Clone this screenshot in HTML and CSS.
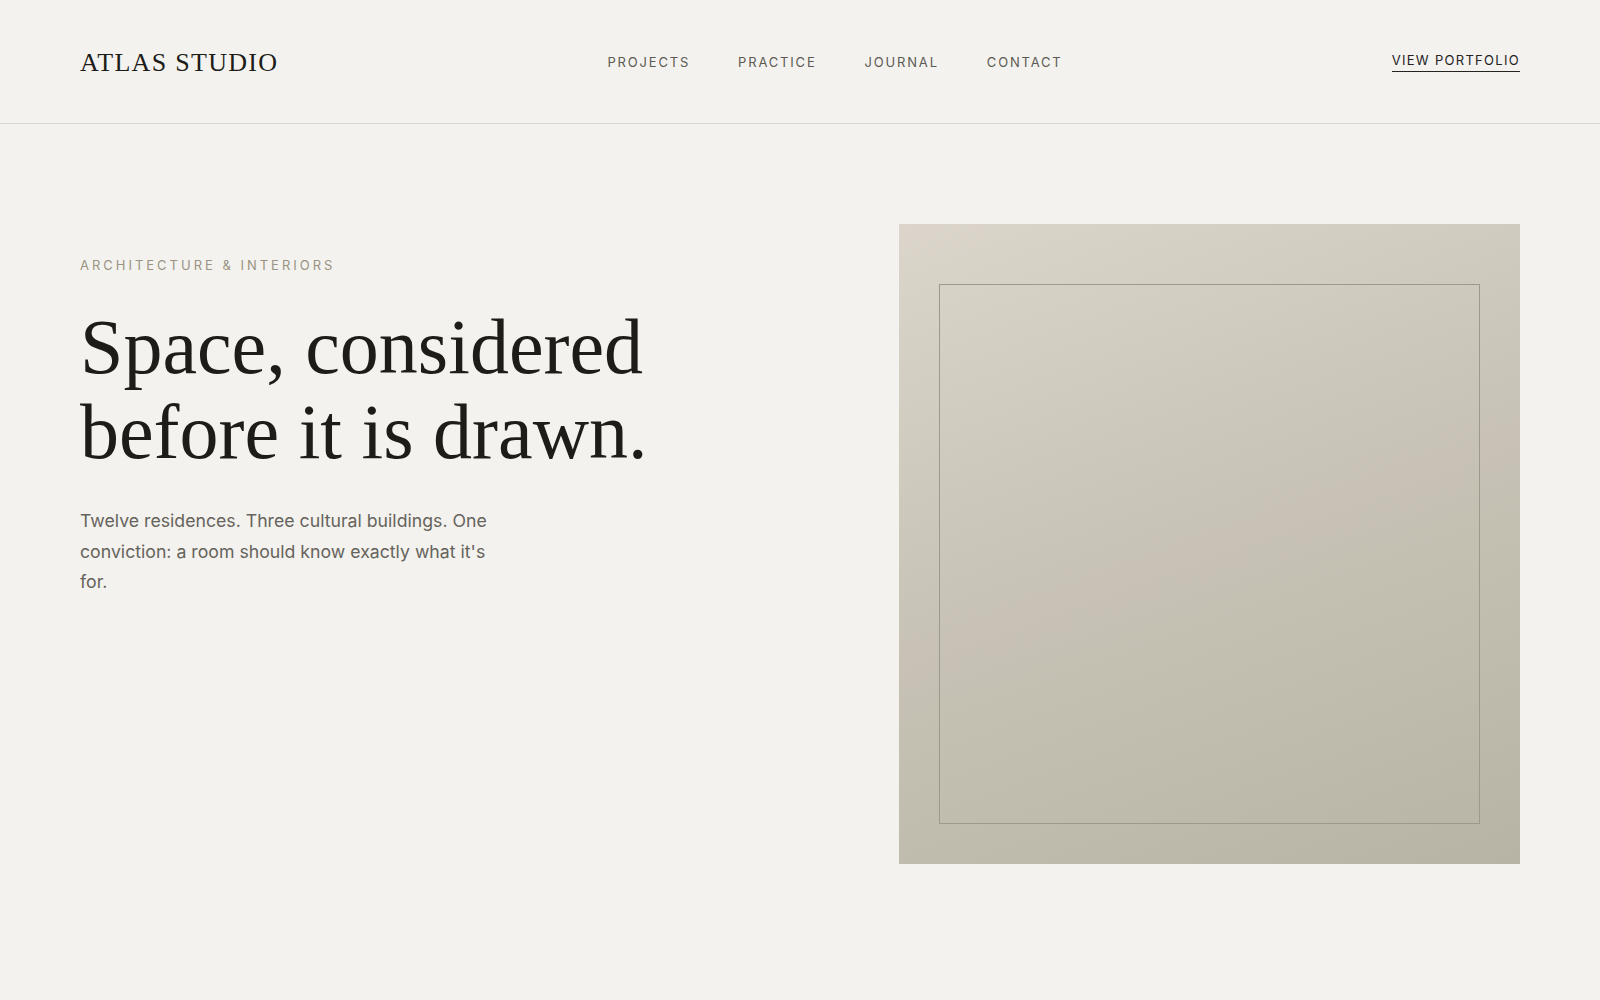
FILE: index.html
```html
<!DOCTYPE html>
<html lang="en">
<head>
<meta charset="utf-8">
<title>Atlas Studio</title>
<link rel="stylesheet" href="styles.css">
</head>
<body>
<header class="site-header">
  <a class="logo" href="#">ATLAS STUDIO</a>
  <nav class="main-nav">
    <a href="#">PROJECTS</a>
    <a href="#">PRACTICE</a>
    <a href="#">JOURNAL</a>
    <a href="#">CONTACT</a>
  </nav>
  <a class="cta" href="#">VIEW PORTFOLIO</a>
</header>
<main class="hero">
  <div class="hero-text">
    <p class="eyebrow">ARCHITECTURE &amp; INTERIORS</p>
    <h1 class="headline">Space, considered<br>before it is drawn.</h1>
    <p class="lede">Twelve residences. Three cultural buildings. One conviction: a room should know exactly what it's for.</p>
  </div>
  <div class="hero-visual">
    <div class="frame"></div>
  </div>
</main>
</body>
</html>
```
FILE: styles.css
```css
* { box-sizing: border-box; }
html, body { margin: 0; padding: 0; }
body {
  background: #f3f2ee;
  font-family: "Inter", "Liberation Sans", sans-serif;
  color: #1f1e1b;
  width: 1600px;
  height: 1000px;
  overflow: hidden;
}
a { text-decoration: none; color: inherit; }

.site-header {
  height: 124px;
  padding: 0 80px;
  display: flex;
  align-items: center;
  justify-content: space-between;
  border-bottom: 1px solid #d9d7d1;
}
.logo {
  font-family: "Liberation Serif", "DejaVu Serif", serif;
  font-size: 26px;
  letter-spacing: 0.05em;
  color: #1d1c19;
  padding-top: 2px;
}
.main-nav {
  display: flex;
  gap: 48px;
}
.main-nav a {
  font-size: 13px;
  letter-spacing: 0.14em;
  color: #5c5a53;
}
.cta {
  font-size: 13px;
  letter-spacing: 0.1em;
  color: #24231f;
  padding-bottom: 3px;
  border-bottom: 1px solid #24231f;
}

.hero {
  display: grid;
  grid-template-columns: 1fr 621px;
  padding: 100px 80px;
}
.hero-text {
  padding-top: 33px;
}
.eyebrow {
  margin: 0;
  font-size: 13px;
  letter-spacing: 0.23em;
  color: #9a9383;
}
.headline {
  margin: 31px 0 0;
  font-family: "Liberation Serif", "DejaVu Serif", serif;
  font-weight: 400;
  font-size: 78px;
  line-height: 85px;
  color: #1d1c19;
}
.lede {
  margin: 32px 0 0;
  max-width: 430px;
  font-size: 17.7px;
  line-height: 30.6px;
  color: #66635c;
}
.hero-visual {
  position: relative;
  height: 640px;
  background: linear-gradient(160deg, #dbd5cb 0%, #c7c2b5 50%, #b8b4a5 100%);
}
.frame {
  position: absolute;
  left: 40px;
  right: 40px;
  top: 60px;
  bottom: 40px;
  border: 1px solid #9c9a8b;
}
```
